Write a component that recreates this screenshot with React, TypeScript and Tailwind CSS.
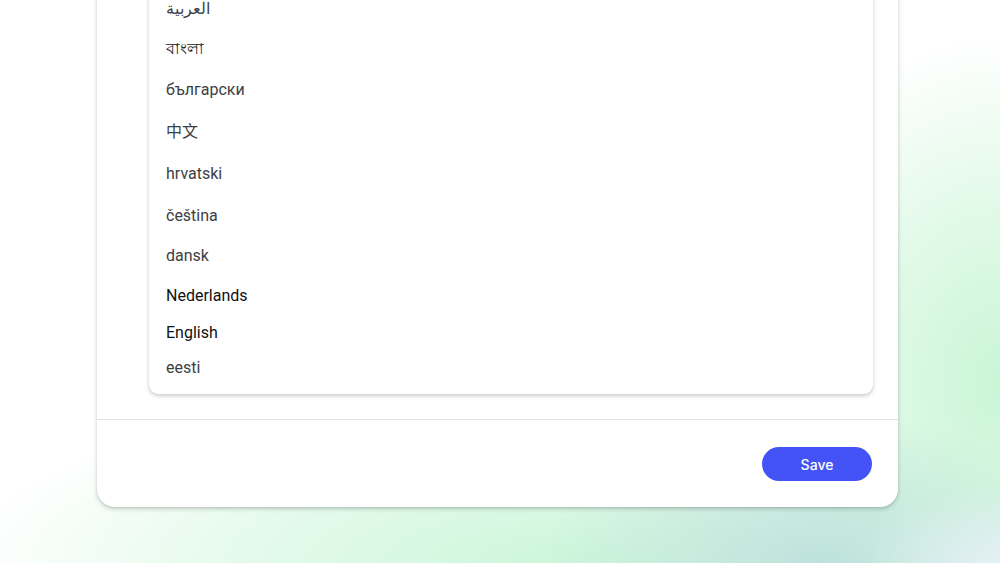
import React from "react";

const languages = [
  { label: "العربية", h: "h-[40px]", tone: "text-[#3c4043]" },
  { label: "বাংলা", h: "h-[40px]", tone: "text-[#202124]" },
  { label: "български", h: "h-[42px]", tone: "text-[#3c4043]" },
  { label: "中文", h: "h-[42px]", tone: "text-[#3c4043]" },
  { label: "hrvatski", h: "h-[42px]", tone: "text-[#3c4043]" },
  { label: "čeština", h: "h-[41px]", tone: "text-[#3c4043]" },
  { label: "dansk", h: "h-[40px]", tone: "text-[#3c4043]" },
  { label: "Nederlands", h: "h-[39px]", tone: "text-[#111111]" },
  { label: "English", h: "h-[36px]", tone: "text-[#111111]" },
  { label: "eesti", h: "h-[34px]", tone: "text-[#3c4043]" },
];

export default function App() {
  return (
    <div className="relative h-[563px] w-full overflow-hidden bg-white bg-[radial-gradient(ellipse_14%_14%_at_100%_100%,#e4eff5_0%,rgba(228,239,245,0)_100%),radial-gradient(ellipse_28%_26%_at_82%_100%,#bde1dc_0%,rgba(189,225,220,0)_100%),radial-gradient(ellipse_26%_62%_at_100%_68%,#c9f5d5_0%,rgba(201,245,213,0.55)_50%,rgba(255,255,255,0)_100%),radial-gradient(ellipse_62%_32%_at_58%_100%,#cbf6d9_0%,rgba(203,246,217,0.5)_55%,rgba(255,255,255,0)_100%)]">
      <div className="flex h-full flex-col justify-end pb-[56px] pl-[97px] pr-[102px]">
        {/* dialog card */}
        <div className="flex flex-col rounded-b-[18px] bg-white shadow-[0_2px_5px_rgba(0,0,0,0.18),0_1px_2px_rgba(0,0,0,0.08)]">
          <div className="pb-[25px] pl-[52px] pr-[25px]">
            <ul className="rounded-b-[9px] bg-white pb-[9px] font-['Roboto','Noto_Sans','Noto_Sans_CJK_SC',sans-serif] text-[16px] shadow-[0_2px_4px_rgba(0,0,0,0.2),0_0_1px_rgba(0,0,0,0.12)]">
              {languages.map((l) => (
                <li
                  key={l.label}
                  className={`flex items-center pl-[17px] ${l.h} ${l.tone}`}
                >
                  {l.label}
                </li>
              ))}
            </ul>
          </div>
          <div className="border-t border-[#e3e3e6]" />
          <div className="flex justify-end px-[26px] pb-[26px] pt-[27px]">
            <button className="h-[34px] w-[110px] rounded-full bg-[#4353f5] font-['Inter','Roboto',sans-serif] text-[14px] font-medium text-white">
              Save
            </button>
          </div>
        </div>
      </div>
    </div>
  );
}
